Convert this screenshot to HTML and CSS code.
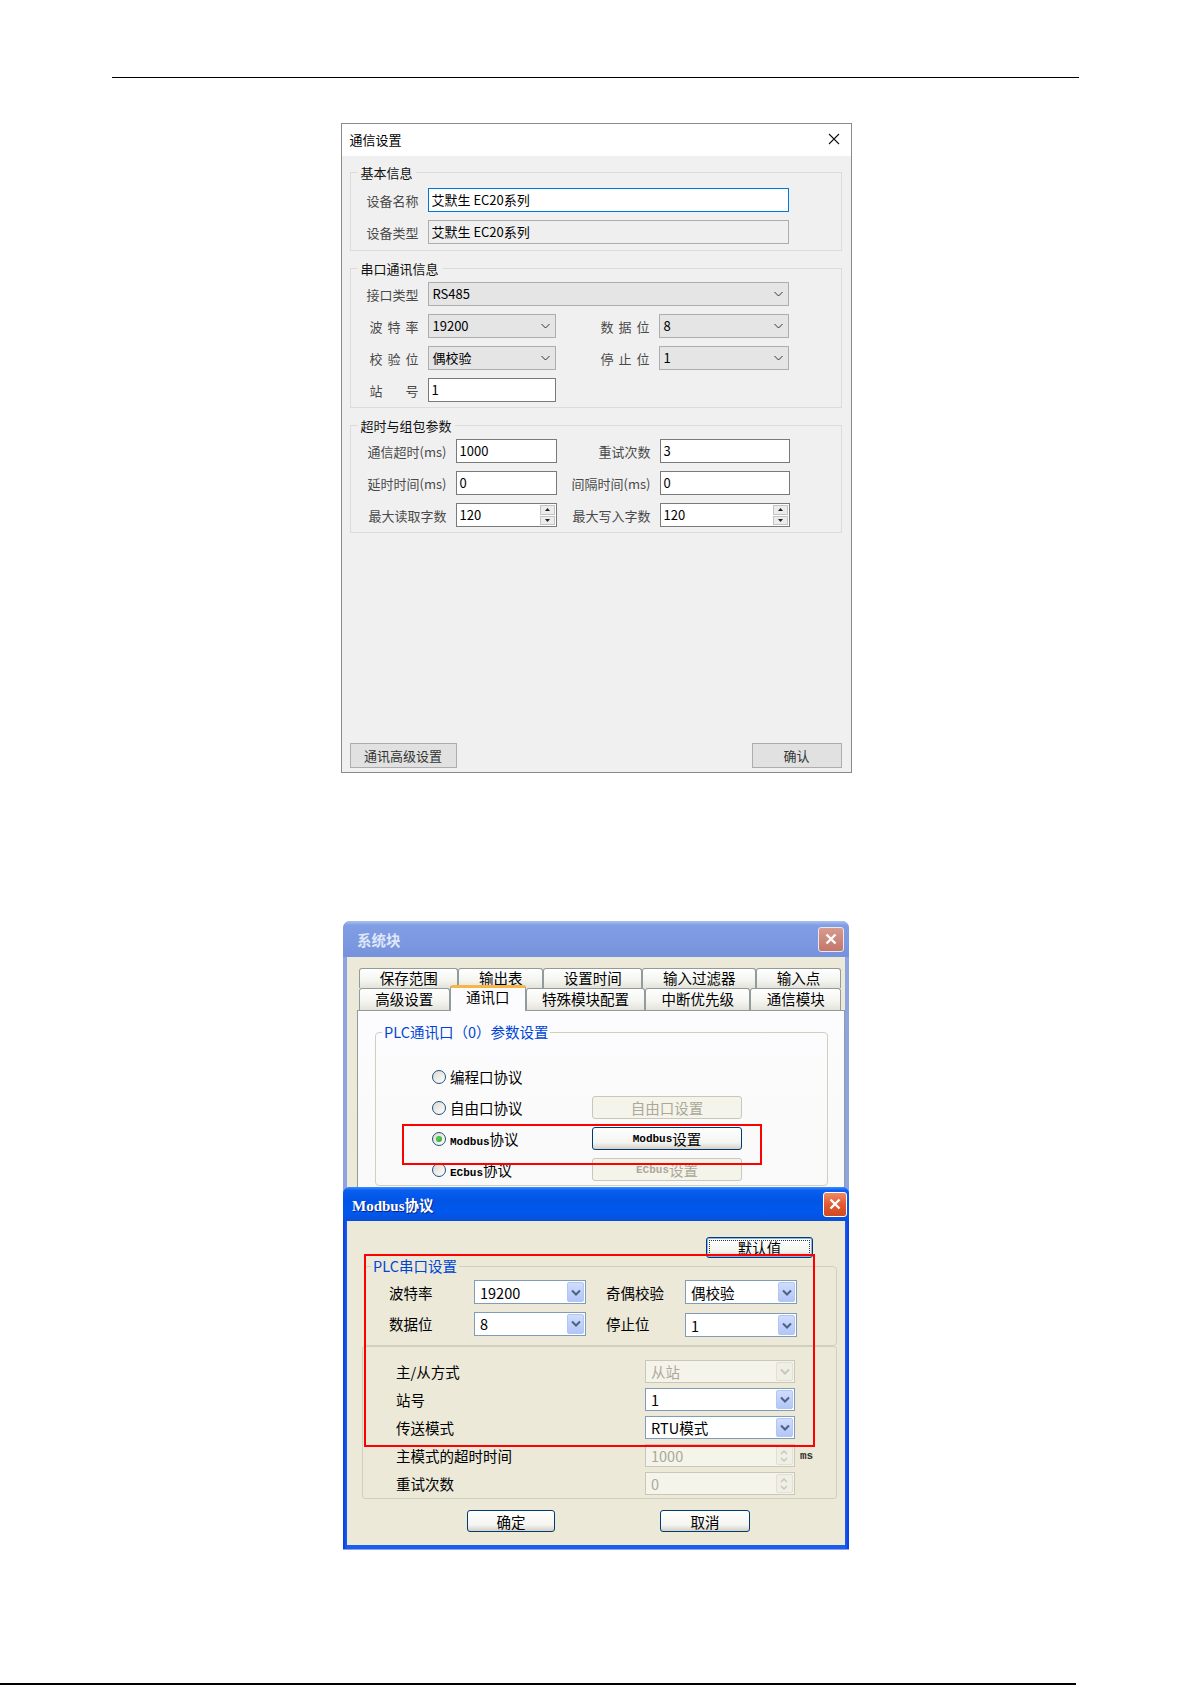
FILE: index.html
```html
<!DOCTYPE html>
<html lang="zh-CN">
<head>
<meta charset="UTF-8">
<title>通信设置</title>
<link rel="stylesheet" href="styles.css">
</head>
<body>
<div class="page">
  <div class="rule-top"></div>

  <!-- 通信设置 (Win10 style) -->
  <div class="dlg">
    <div class="dlg-title">
      <span>通信设置</span>
      <svg width="12" height="12" viewBox="0 0 12 12"><path d="M1 1L11 11M11 1L1 11" stroke="#111" stroke-width="1.1"/></svg>
    </div>
    <div class="dlg-body">
      <fieldset class="grp grp-basic">
        <legend>基本信息</legend>
        <div class="g4">
          <span class="lbl">设备名称</span>
          <div class="edit span3 focus">艾默生 EC20系列</div>
          <span class="lbl">设备类型</span>
          <div class="edit span3 ro">艾默生 EC20系列</div>
        </div>
      </fieldset>

      <fieldset class="grp">
        <legend>串口通讯信息</legend>
        <div class="g4">
          <span class="lbl">接口类型</span>
          <div class="combo span3">RS485<svg width="9" height="6" viewBox="0 0 9 6"><path d="M0.5 1L4.5 5L8.5 1" fill="none" stroke="#333"/></svg></div>
          <span class="lbl spread">波特率</span>
          <div class="combo">19200<svg width="9" height="6" viewBox="0 0 9 6"><path d="M0.5 1L4.5 5L8.5 1" fill="none" stroke="#333"/></svg></div>
          <span class="lbl spread">数据位</span>
          <div class="combo">8<svg width="9" height="6" viewBox="0 0 9 6"><path d="M0.5 1L4.5 5L8.5 1" fill="none" stroke="#333"/></svg></div>
          <span class="lbl spread">校验位</span>
          <div class="combo">偶校验<svg width="9" height="6" viewBox="0 0 9 6"><path d="M0.5 1L4.5 5L8.5 1" fill="none" stroke="#333"/></svg></div>
          <span class="lbl spread">停止位</span>
          <div class="combo">1<svg width="9" height="6" viewBox="0 0 9 6"><path d="M0.5 1L4.5 5L8.5 1" fill="none" stroke="#333"/></svg></div>
          <span class="lbl spread">站号</span>
          <div class="edit">1</div>
        </div>
      </fieldset>

      <fieldset class="grp">
        <legend>超时与组包参数</legend>
        <div class="g4 g-timing">
          <span class="lbl">通信超时(ms)</span>
          <div class="edit">1000</div>
          <span class="lbl">重试次数</span>
          <div class="edit">3</div>
          <span class="lbl">延时时间(ms)</span>
          <div class="edit">0</div>
          <span class="lbl">间隔时间(ms)</span>
          <div class="edit">0</div>
          <span class="lbl">最大读取字数</span>
          <div class="edit spin">120
            <span class="spin-btns">
              <span><svg width="5" height="3" viewBox="0 0 5 3"><path d="M0 3L2.5 0L5 3Z" fill="#222"/></svg></span>
              <span><svg width="5" height="3" viewBox="0 0 5 3"><path d="M0 0L2.5 3L5 0Z" fill="#222"/></svg></span>
            </span>
          </div>
          <span class="lbl">最大写入字数</span>
          <div class="edit spin">120
            <span class="spin-btns">
              <span><svg width="5" height="3" viewBox="0 0 5 3"><path d="M0 3L2.5 0L5 3Z" fill="#222"/></svg></span>
              <span><svg width="5" height="3" viewBox="0 0 5 3"><path d="M0 0L2.5 3L5 0Z" fill="#222"/></svg></span>
            </span>
          </div>
        </div>
      </fieldset>

      <div class="dlg-foot">
        <div class="btn btn-adv">通讯高级设置</div>
        <div class="btn btn-ok">确认</div>
      </div>
    </div>
  </div>

  <!-- 系统块 with the Modbus协议 dialog on top (XP style) -->
  <div class="xp-stack">
    <div class="xp-win idle">
      <div class="xp-title">
        <span>系统块</span>
        <span class="xp-close"><svg width="12" height="12" viewBox="0 0 12 12"><path d="M1.5 1.5L10.5 10.5M10.5 1.5L1.5 10.5" stroke="#fff" stroke-width="2.4"/></svg></span>
      </div>
      <div class="xp-body sys-body">
        <div class="tab-row back">
          <span class="tab">保存范围</span>
          <span class="tab">输出表</span>
          <span class="tab">设置时间</span>
          <span class="tab">输入过滤器</span>
          <span class="tab">输入点</span>
        </div>
        <div class="tab-row front">
          <span class="tab">高级设置</span>
          <span class="tab on">通讯口</span>
          <span class="tab">特殊模块配置</span>
          <span class="tab">中断优先级</span>
          <span class="tab">通信模块</span>
        </div>
        <div class="tab-panel">
          <fieldset class="xp-grp">
            <legend>PLC通讯口（0）参数设置</legend>
            <div class="opt-grid">
              <span class="radio"><i></i><span>编程口协议</span></span>
              <span></span>
              <span class="radio"><i></i><span>自由口协议</span></span>
              <span class="xbtn off">自由口设置</span>
              <span class="radio"><i class="sel"></i><span><b class="lat">Modbus</b>协议</span></span>
              <span class="xbtn"><b class="lat">Modbus</b>设置</span>
              <span class="radio"><i></i><span><b class="lat">ECbus</b>协议</span></span>
              <span class="xbtn off"><b class="lat">ECbus</b>设置</span>
            </div>
          </fieldset>
        </div>
      </div>
    </div>

    <span class="mark mark-opt"></span>

    <div class="xp-win active modbus">
      <div class="xp-title">
        <span class="mb-title"><span class="serif">Modbus</span>协议</span>
        <span class="xp-close"><svg width="12" height="12" viewBox="0 0 12 12"><path d="M1.5 1.5L10.5 10.5M10.5 1.5L1.5 10.5" stroke="#fff" stroke-width="2.4"/></svg></span>
      </div>
      <div class="xp-body mb-body">
        <div class="def-row">
          <span class="xbtn def"><span>默认值</span></span>
        </div>
        <fieldset class="xp-grp mb-grp">
          <legend>PLC串口设置</legend>
          <div class="port-grid">
            <span>波特率</span>
            <div class="xcombo">19200<span class="drop"><svg width="10" height="7" viewBox="0 0 10 7"><path d="M1 1.5L5 5.5L9 1.5" fill="none" stroke="#4d6185" stroke-width="2"/></svg></span></div>
            <span class="rlbl">奇偶校验</span>
            <div class="xcombo">偶校验<span class="drop"><svg width="10" height="7" viewBox="0 0 10 7"><path d="M1 1.5L5 5.5L9 1.5" fill="none" stroke="#4d6185" stroke-width="2"/></svg></span></div>
            <span>数据位</span>
            <div class="xcombo">8<span class="drop"><svg width="10" height="7" viewBox="0 0 10 7"><path d="M1 1.5L5 5.5L9 1.5" fill="none" stroke="#4d6185" stroke-width="2"/></svg></span></div>
            <span class="rlbl">停止位</span>
            <div class="xcombo low">1<span class="drop"><svg width="10" height="7" viewBox="0 0 10 7"><path d="M1 1.5L5 5.5L9 1.5" fill="none" stroke="#4d6185" stroke-width="2"/></svg></span></div>
          </div>
        </fieldset>
        <div class="mb-box">
          <div class="mode-grid">
            <span>主/从方式</span>
            <div class="xcombo off">从站<span class="drop"><svg width="10" height="7" viewBox="0 0 10 7"><path d="M1 1.5L5 5.5L9 1.5" fill="none" stroke="#c9c7ba" stroke-width="2"/></svg></span></div>
            <span></span>
            <span>站号</span>
            <div class="xcombo">1<span class="drop"><svg width="10" height="7" viewBox="0 0 10 7"><path d="M1 1.5L5 5.5L9 1.5" fill="none" stroke="#4d6185" stroke-width="2"/></svg></span></div>
            <span></span>
            <span>传送模式</span>
            <div class="xcombo">RTU模式<span class="drop"><svg width="10" height="7" viewBox="0 0 10 7"><path d="M1 1.5L5 5.5L9 1.5" fill="none" stroke="#4d6185" stroke-width="2"/></svg></span></div>
            <span></span>
            <span>主模式的超时时间</span>
            <div class="xcombo off">1000<span class="drop spin"><svg width="8" height="14" viewBox="0 0 8 14"><path d="M1 5L4 2L7 5M1 9L4 12L7 9" fill="none" stroke="#c9c7ba" stroke-width="1.5"/></svg></span></div>
            <span class="unit lat">ms</span>
            <span>重试次数</span>
            <div class="xcombo off">0<span class="drop spin"><svg width="8" height="14" viewBox="0 0 8 14"><path d="M1 5L4 2L7 5M1 9L4 12L7 9" fill="none" stroke="#c9c7ba" stroke-width="1.5"/></svg></span></div>
            <span></span>
          </div>
        </div>
        <div class="mb-foot">
          <span class="xbtn btn-confirm">确定</span>
          <span class="xbtn btn-cancel">取消</span>
        </div>
      </div>
      <span class="mark mark-port"></span>
    </div>
  </div>

  <div class="rule-bottom"></div>
</div>
</body>
</html>
```

FILE: styles.css
```css
* {
    box-sizing: border-box;
}
body {
    margin: 0;
    background: #fff;
    font-family: "Noto Sans CJK SC", "Microsoft YaHei", sans-serif;
    color: #000;
}
.page {
    min-height: 1685px;
    display: flex;
    flex-direction: column;
    padding-top: 77px;
}
.rule-top {
    height: 1px;
    background: #000;
    margin: 0 113px 0 112px;
}
.rule-bottom {
    margin-top: auto;
    width: 1076px;
    height: 2px;
    background: #000;
}

/* ---------- 通信设置 ---------- */
.dlg {
    width: 511px;
    height: 650px;
    margin: 45px auto 0;
    border: 1px solid #8a8a8a;
    background: #f0f0f0;
    display: flex;
    flex-direction: column;
    font-size: 13px;
}
.dlg-title {
    height: 32px;
    flex: none;
    background: #fff;
    display: flex;
    align-items: center;
    justify-content: space-between;
    padding: 0 11px 2px 8px;
}
.dlg-body {
    flex: 1;
    display: flex;
    flex-direction: column;
    padding: 8px 9px 4px 8px;
}
.grp {
    margin: 0;
    padding: 5px 0;
    border: 1px solid #dcdcdc;
    min-width: 0;
}
.grp + .grp {
    margin-top: 9px;
}
.grp-basic {
    padding: 7px 0 6px;
}
.grp legend {
    margin-left: 7px;
    padding: 0 3px;
    line-height: 17px;
    color: #111;
}
.g4 {
    display: grid;
    grid-template-columns: 52px 128px 85px 130px;
    column-gap: 9px;
    row-gap: 8px;
    align-items: center;
    padding-left: 16px;
}
.g-timing {
    grid-template-columns: 80px 101px 85px 130px;
}
.span3 {
    grid-column: span 3;
}
.lbl {
    text-align: right;
    white-space: nowrap;
    line-height: 17px;
    color: #4a4a4a;
}
.spread {
    width: 49px;
    justify-self: end;
    text-align: justify;
    text-align-last: justify;
}
.edit {
    height: 24px;
    border: 1px solid #7a7a7a;
    background: #fff;
    padding: 0 3px;
    line-height: 21px;
    white-space: nowrap;
}
.edit.focus {
    border-color: #0078d7;
}
.edit.ro {
    background: #efefef;
    border-color: #adadad;
}
.combo {
    height: 24px;
    border: 1px solid #adadad;
    background: #e5e5e5;
    display: flex;
    align-items: center;
    justify-content: space-between;
    padding: 0 5px 1px 4px;
}
.spin {
    display: flex;
    justify-content: space-between;
    padding-right: 1px;
}
.spin-btns {
    width: 15px;
    margin: 1px 0;
    display: flex;
    flex-direction: column;
    gap: 1px;
}
.spin-btns span {
    flex: 1;
    background: #ececec;
    border: 1px solid #c4c4c4;
    display: flex;
    align-items: center;
    justify-content: center;
}
.spin-btns svg {
    display: block;
}
.dlg-foot {
    margin-top: auto;
    display: flex;
    justify-content: space-between;
}
.btn {
    height: 25px;
    border: 1px solid #adadad;
    background: #e1e1e1;
    color: #333;
    display: flex;
    align-items: center;
    justify-content: center;
    padding-bottom: 1px;
}
.btn-adv {
    width: 107px;
}
.btn-ok {
    width: 90px;
}

/* ---------- XP windows ---------- */
.xp-stack {
    position: relative;
    width: 506px;
    height: 629px;
    margin: 148px auto 0;
    font-size: 14.5px;
}
.xp-win {
    display: flex;
    flex-direction: column;
    border-radius: 7px 7px 0 0;
    padding: 0 4px 4px;
}
.xp-win.idle {
    height: 100%;
    background: #8ea4e2;
}
.xp-win.active {
    background: linear-gradient(to right, #0a3ce0, #1a5cf0 4px, #1a5cf0 calc(100% - 4px), #0a3ce0);
}
.xp-title {
    margin: 0 -4px;
    display: flex;
    align-items: center;
    justify-content: space-between;
    border-radius: 7px 7px 0 0;
    font-weight: bold;
}
.idle .xp-title {
    height: 36px;
    padding: 0 5px 0 14px;
    color: #dfe7f8;
    background: linear-gradient(#a9c0f0, #819ee4 12%, #7b98e0 60%, #7592dc);
}
.active .xp-title {
    height: 34px;
    padding: 0 2px 0 9px;
    color: #fff;
    text-shadow: 1px 1px 0 #0c1f8c;
    background: linear-gradient(#3d8dff, #0a5ef0 10%, #0055e5 40%, #0058ee 75%, #0a4fd8);
}
.serif {
    font-family: "Liberation Serif", serif;
    font-size: 15px;
}
.xp-close {
    width: 26px;
    height: 25px;
    border: 1px solid #fff;
    border-radius: 3px;
    display: flex;
    align-items: center;
    justify-content: center;
}
.idle .xp-close {
    background: linear-gradient(#d79a8e, #c3776a);
    border-color: #e8e6f0;
}
.active .xp-close {
    width: 24px;
    background: linear-gradient(#f08a66, #e15a30 50%, #d04a22);
}
.xp-body {
    flex: 1;
    background: #ece9d8;
    display: flex;
    flex-direction: column;
}
.sys-body {
    padding: 11px 0 0 10px;
}

/* tabs */
.tab-row {
    display: flex;
    margin: 0 4px 0 2px;
}
.tab-row.back {
    height: 20px;
}
.tab-row.front {
    height: 22px;
}
.tab {
    flex: 1 1 auto;
    border: 1px solid #919b9c;
    border-bottom: 0;
    border-radius: 3px 3px 0 0;
    background: linear-gradient(#fff, #f4f4f0 60%, #e4e3da);
    text-align: center;
    white-space: nowrap;
    line-height: 18px;
}
.front .tab {
    line-height: 20px;
}
.tab.on {
    position: relative;
    z-index: 1;
    margin: -3px 0 -1px;
    border-top: 3px solid #f7b548;
    background: #fcfcfe;
    line-height: 17px;
}
.tab-panel {
    flex: 1;
    border: 1px solid #919b9c;
    background: linear-gradient(#fcfcfe, #f4f3ee);
    padding-top: 12px;
}
.xp-grp {
    margin: 0 16px 0 17px;
    padding: 20px 0 0;
    border: 1px solid #d0d0bf;
    border-radius: 4px;
    min-width: 0;
}
.xp-grp legend {
    margin-left: 6px;
    padding: 0 2px;
    line-height: 18px;
    color: #0046d5;
}
.opt-grid {
    display: grid;
    grid-template-columns: 160px 150px;
    grid-auto-rows: 31px;
    align-items: center;
    padding-left: 56px;
}
.radio {
    display: flex;
    align-items: center;
    gap: 4px;
    white-space: nowrap;
}
.radio i {
    width: 14px;
    height: 14px;
    border: 1px solid #1c5180;
    border-radius: 50%;
    background: linear-gradient(135deg, #dcd9ce, #fff);
    display: flex;
    align-items: center;
    justify-content: center;
}
.radio i.sel::after {
    content: "";
    width: 6px;
    height: 6px;
    border-radius: 50%;
    background: radial-gradient(circle at 40% 40%, #5bd45b, #21a121);
}
.lat {
    font-family: "Liberation Mono", monospace;
    font-size: 11px;
    font-weight: bold;
}
.xbtn {
    height: 23px;
    border: 1px solid #003c74;
    border-radius: 3px;
    background: linear-gradient(#fff, #f4f4f0 70%, #d6d0c5);
    display: flex;
    align-items: center;
    justify-content: center;
    white-space: nowrap;
}
.xbtn.off {
    border-color: #c9c7ba;
    background: #f5f4ea;
    color: #aca899;
}
.mark {
    position: absolute;
    border: 2px solid #f00;
}
.mark-opt {
    left: 59px;
    top: 203px;
    width: 360px;
    height: 41px;
}

/* Modbus协议 dialog */
.modbus {
    position: absolute;
    left: 0;
    top: 266px;
    width: 100%;
    height: 362px;
}
.mb-body {
    padding-top: 16px;
}
.def-row {
    display: flex;
    justify-content: flex-end;
    padding-right: 32px;
}
.xbtn.def {
    width: 107px;
    height: 21px;
    padding: 2px;
    box-shadow: inset 0 0 0 1px #8cb2ef;
}
.xbtn.def span {
    flex: 1;
    height: 100%;
    border: 1px dotted #333;
    text-align: center;
    line-height: 14px;
}
.mb-grp {
    margin: -1px 8px 0 17px;
    padding: 5px 0 8px;
}
.port-grid {
    display: grid;
    grid-template-columns: 85px 112px 99px 112px;
    row-gap: 6px;
    align-items: center;
    padding-left: 24px;
}
.rlbl {
    padding-left: 20px;
}
.xcombo {
    height: 24px;
    border: 1px solid #7f9db9;
    background: #fff;
    display: flex;
    align-items: center;
    justify-content: space-between;
    padding: 1px 1px 1px 5px;
    white-space: nowrap;
}
.xcombo.low {
    margin-top: 3px;
}
.drop {
    width: 17px;
    height: 100%;
    border: 1px solid #b3c6f2;
    border-radius: 2px;
    background: linear-gradient(#cfdcfd, #b2c6f6);
    display: flex;
    align-items: center;
    justify-content: center;
}
.xcombo.off {
    border-color: #c9c7ba;
    background: #f5f4ea;
    color: #aca899;
}
.off .drop {
    border-color: #e2e0d4;
    background: #f0efe6;
}
.mb-box {
    margin: 0 8px 0 15px;
    height: 153px;
    border: 1px solid #d0d0bf;
    border-radius: 3px;
    padding-top: 13px;
}
.mode-grid {
    display: grid;
    grid-template-columns: 249px 150px auto;
    grid-auto-rows: 23px;
    row-gap: 5px;
    align-items: center;
    padding-left: 33px;
}
.mode-grid .xcombo {
    height: 23px;
}
.unit {
    padding-left: 5px;
    color: #333;
}
.mb-foot {
    display: flex;
    gap: 105px;
    padding: 11px 0 0 120px;
}
.btn-confirm {
    width: 88px;
    height: 22px;
}
.btn-cancel {
    width: 90px;
    height: 22px;
}
.mark-port {
    left: 21px;
    top: 67px;
    width: 451px;
    height: 193px;
}
```
